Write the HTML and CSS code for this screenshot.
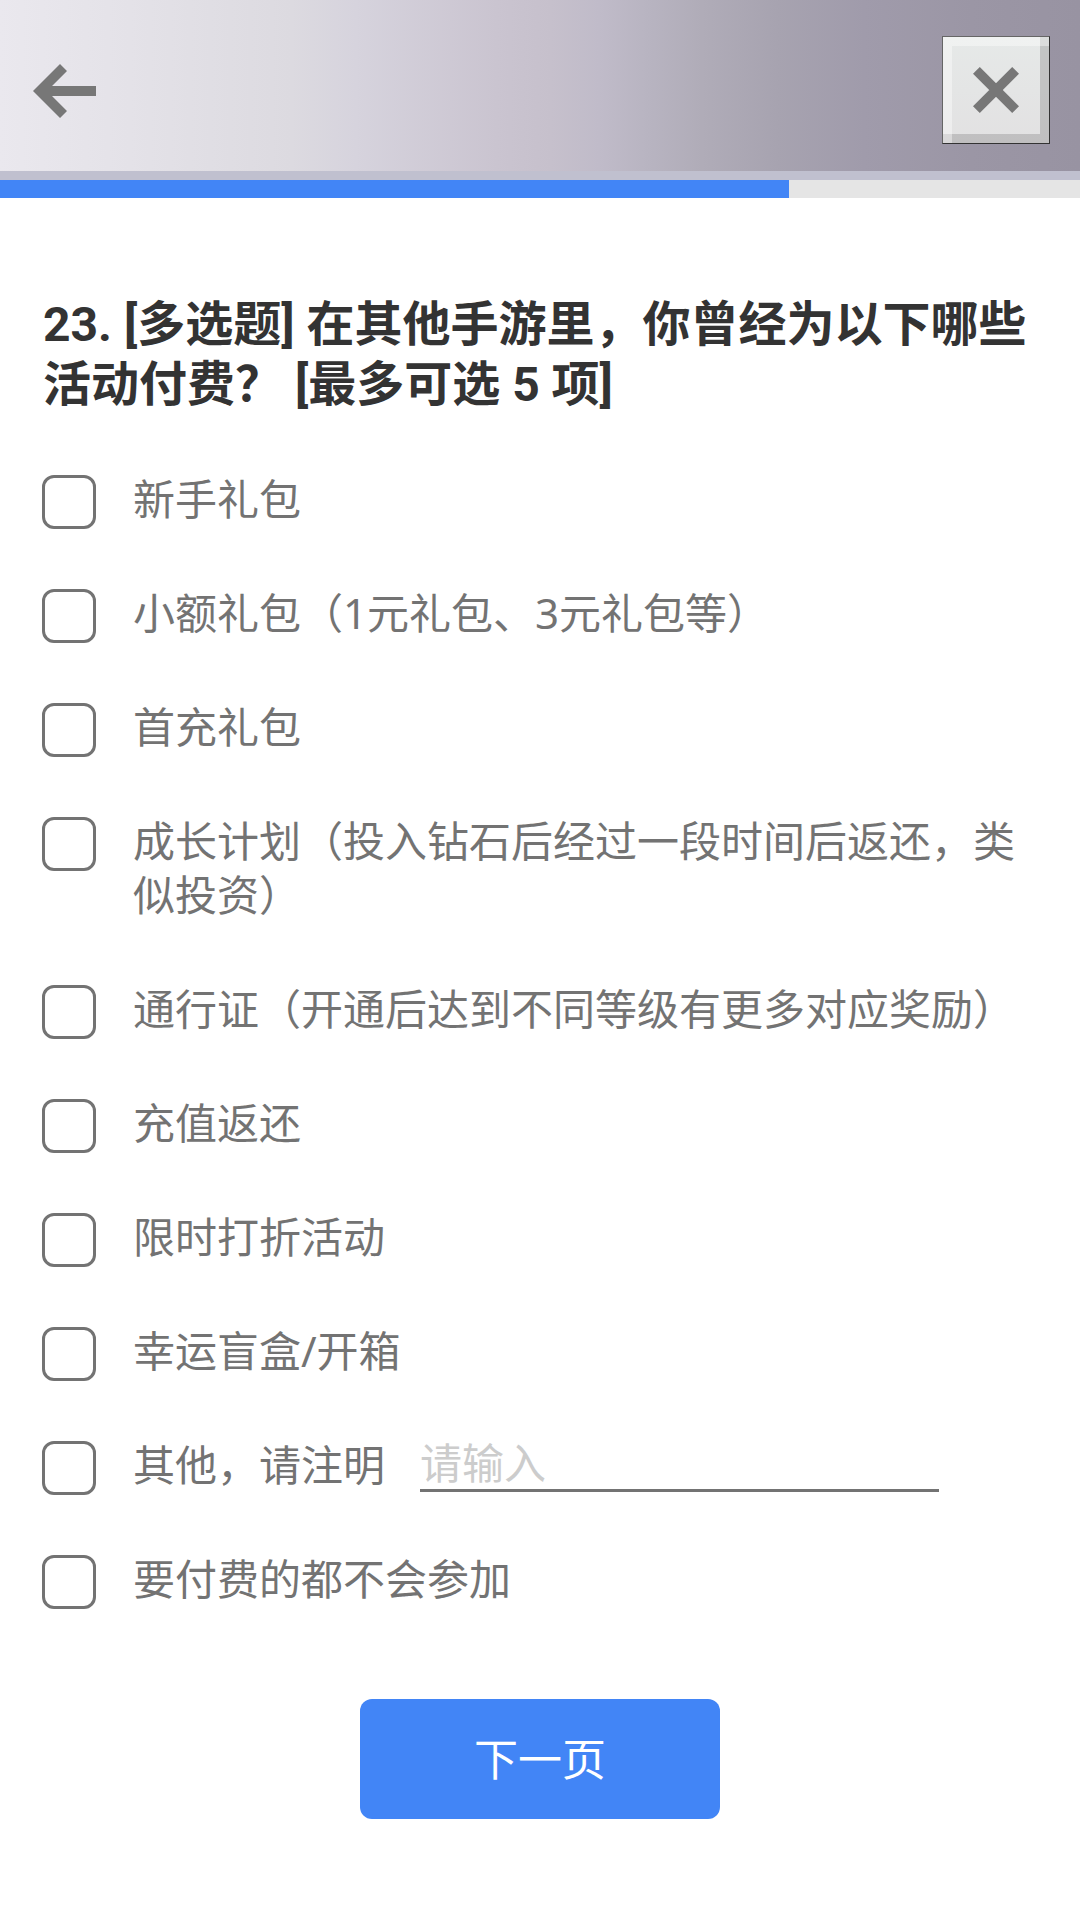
FILE: index.html
```html
<!DOCTYPE html>
<html lang="zh-CN">
<head>
<meta charset="UTF-8">
<meta name="viewport" content="width=device-width, initial-scale=1.0">
<title>问卷调查</title>
<link rel="stylesheet" href="styles.css">
</head>
<body>

<header class="header">
  <button class="back-btn" type="button" aria-label="返回">
    <svg width="64" height="54" viewBox="0 0 64 54">
      <path d="M0 27L27 0l7 7-15 15h44v10H19l15 15-7 7z" fill="#777"/>
    </svg>
  </button>
  <button class="close-btn" type="button" aria-label="关闭">
    <svg width="46" height="46" viewBox="0 0 46 46">
      <path d="M3.4 3.4l39.2 39.2M42.6 3.4L3.4 42.6" fill="none" stroke="#777" stroke-width="9.6"/>
    </svg>
  </button>
</header>

<div class="progress"><div class="progress-bar" style="width: 73.06%"></div></div>

<main class="survey">
  <h1 class="title">23. [多选题] 在其他手游里，你曾经为以下哪些<br>活动付费？ [最多可选 5 项]</h1>

  <form class="options">
    <label class="option"><input type="checkbox"><span>新手礼包</span></label>
    <label class="option"><input type="checkbox"><span>小额礼包（1元礼包、3元礼包等）</span></label>
    <label class="option"><input type="checkbox"><span>首充礼包</span></label>
    <label class="option"><input type="checkbox"><span>成长计划（投入钻石后经过一段时间后返还，类似投资）</span></label>
    <label class="option"><input type="checkbox"><span>通行证（开通后达到不同等级有更多对应奖励）</span></label>
    <label class="option"><input type="checkbox"><span>充值返还</span></label>
    <label class="option"><input type="checkbox"><span>限时打折活动</span></label>
    <label class="option"><input type="checkbox"><span>幸运盲盒/开箱</span></label>
    <label class="option"><input type="checkbox"><span>其他，请注明</span><input class="other-input" type="text" placeholder="请输入"></label>
    <label class="option"><input type="checkbox"><span>要付费的都不会参加</span></label>
  </form>

  <button class="next-btn" type="button">下一页</button>
</main>

</body>
</html>
```

FILE: styles.css
```css
* {
  box-sizing: border-box;
}

body {
  margin: 0;
  background: #fff;
  color: #737373;
  font-family: Roboto, "Noto Sans CJK SC", sans-serif;
}

button {
  padding: 0;
  border: none;
  background: none;
  font-family: inherit;
  cursor: pointer;
}

.header {
  display: flex;
  justify-content: space-between;
  align-items: flex-start;
  height: 180px;
  padding: 36px 30px 0 33px;
  border-bottom: 9px solid #c0c0cf;
  background: linear-gradient(90deg, #eae8ee 0%, #e4e2e8 12%, #dcdae0 27%, #d6d3dd 33%, #cac4d0 46%, #c6c0cc 51%, #c0bbc9 55.5%, #b8b4c1 60%, #b0acb8 65%, #a7a3b0 72%, #a09bab 80%, #9b96a5 90%, #9893a2 100%);
}

.back-btn {
  margin-top: 28px;
}

.back-btn svg,
.close-btn svg {
  display: block;
}

.close-btn {
  display: flex;
  justify-content: center;
  align-items: center;
  width: 108px;
  height: 108px;
  border: 1px solid;
  border-color: #666 #333 #333 #666;
  background: linear-gradient(#e6e9e8, #e2e1e2);
  box-shadow: inset 9px 9px 0 rgba(255, 255, 255, 0.4), inset -9px -9px 0 rgba(0, 0, 0, 0.15);
}

.progress {
  height: 18px;
  background: #e5e5e5;
}

.progress-bar {
  height: 100%;
  background: #4285f6;
}

.survey {
  padding: 97px 44px 0;
}

.title {
  margin: 0 0 0 -1px;
  color: #333;
  font-size: 48px;
  font-weight: 700;
  line-height: 60px;
  white-space: nowrap;
}

.options {
  margin-top: 60px;
}

.option {
  display: flex;
  align-items: flex-start;
  margin-bottom: 60px;
  font-family: "Noto Sans", "Noto Sans CJK SC", sans-serif;
  font-size: 42px;
  font-weight: 400;
  line-height: 54px;
}

.option span {
  margin: -3px 0 3px;
}

.option input[type="checkbox"] {
  appearance: none;
  flex: none;
  width: 54px;
  height: 54px;
  margin: 0 37px 0 -2px;
  border: 3px solid #737373;
  border-radius: 12px;
}

.other-input {
  width: 519px;
  height: 51px;
  margin-left: 35px;
  padding: 0 0 5px;
  border: none;
  border-bottom: 3px solid #737373;
  outline: none;
  font: inherit;
}

.other-input::placeholder {
  color: #ccc;
}

.next-btn {
  display: block;
  width: 360px;
  height: 120px;
  margin: 90px auto 0;
  padding-bottom: 5px;
  border-radius: 12px;
  background: #4285f6;
  color: #fff;
  font-size: 44px;
  font-weight: 400;
}
```
